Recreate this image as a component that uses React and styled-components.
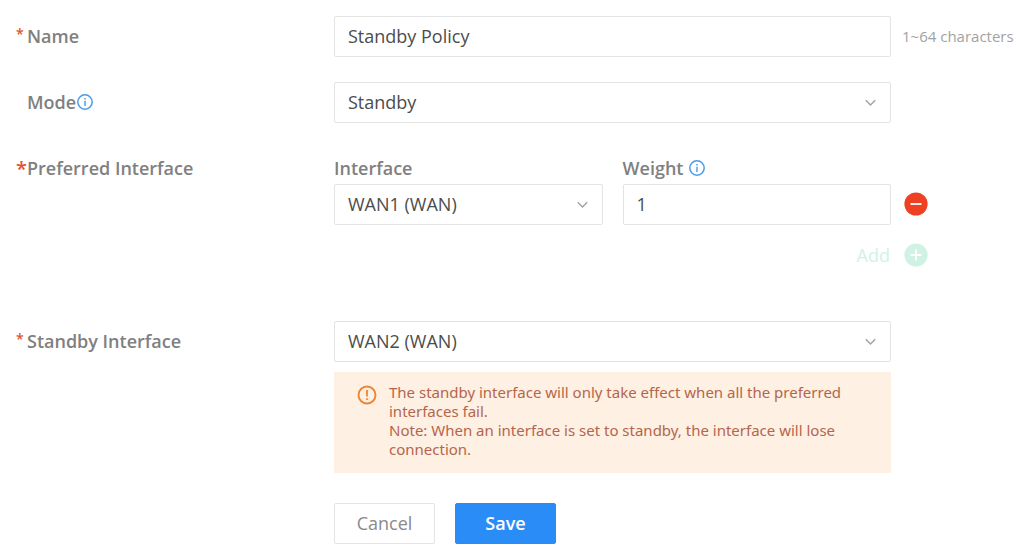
import React from 'react';
import styled, { createGlobalStyle } from 'styled-components';

const GlobalStyle = createGlobalStyle`
  *, *::before, *::after { box-sizing: border-box; }
  body {
    margin: 0;
    background: #fff;
    color: #4c4c4c;
    font: 400 18px/24px 'Open Sans', 'Noto Sans', sans-serif;
  }
`;

const Form = styled.form`
  padding: 16px 0 12px 16px;
`;

const Row = styled.div`
  display: grid;
  grid-template-columns: minmax(0, 318fr) minmax(0, 557fr) 133px;
  align-items: start;
  margin-bottom: ${({ $gap = 25 }) => $gap}px;
`;

const LabelCell = styled.div`
  display: flex;
  align-items: center;
  height: ${({ $short }) => ($short ? 24 : 40)}px;
  color: #808080;
  font-weight: 600;
`;

const Mark = styled.span`
  flex: none;
  width: 11px;
  height: 24px;
  color: #e0532f;
  font-size: ${({ $large }) => ($large ? 20 : 14)}px;
  line-height: ${({ $large }) => ($large ? 26 : 20)}px;
`;

const Control = styled.div`
  min-width: 0;
`;

const Aside = styled.div`
  display: flex;
  align-items: center;
  height: 40px;
  padding-left: ${({ $pad = 11 }) => $pad}px;
  color: #a2a2a2;
  font-size: 15px;
  white-space: nowrap;
`;

const TextInput = styled.input`
  display: block;
  width: 100%;
  height: 41px;
  padding: 0 13px 2px;
  border: 1px solid #e3e3e3;
  border-radius: 2px;
  background: #fff;
  color: #4c4c4c;
  font: inherit;
`;

const SelectWrap = styled.div`
  position: relative;
  svg {
    position: absolute;
    top: 17px;
    right: 15px;
    pointer-events: none;
  }
`;

const SelectBox = styled(TextInput).attrs({ as: 'select' })`
  appearance: none;
`;

const InfoButton = styled.button`
  display: flex;
  padding: 0;
  margin-left: ${({ $gap }) => $gap}px;
  border: 0;
  background: none;
`;

const Pair = styled.div`
  display: grid;
  grid-template-columns: 1fr 1fr;
  column-gap: 20px;
`;

const FieldHead = styled.div`
  display: flex;
  align-items: center;
  height: 28px;
  padding-bottom: 4px;
  color: #808080;
  font-weight: 600;
`;

const PairAside = styled(Aside)`
  margin-top: 28px;
`;

const IconButton = styled.button`
  display: flex;
  padding: 0;
  border: 0;
  background: none;
`;

const AddButton = styled.button`
  grid-column: 2 / 4;
  justify-self: end;
  display: flex;
  align-items: center;
  gap: 14px;
  margin: 18px 96px 0 0;
  padding: 0;
  border: 0;
  background: none;
  color: #d0f2e5;
  font: inherit;
`;

const Notice = styled.div`
  display: flex;
  gap: 12px;
  margin-top: 10px;
  padding: 11px 24px 14px 23px;
  background: #fef0e2;
  color: #b5654c;
  font-family: 'Noto Sans', 'Open Sans', sans-serif;
  font-size: 15px;
  line-height: 19px;
  svg { flex: none; margin-top: 2px; }
  p { margin: 0; }
`;

const Actions = styled.div`
  grid-column: 2;
  display: flex;
  gap: 20px;
  margin-top: 5px;
`;

const Button = styled.button`
  width: 101px;
  height: 41px;
  padding: 0 0 2px;
  border: 1px solid ${({ $primary }) => ($primary ? '#2a8df7' : '#e3e3e3')};
  border-radius: 2px;
  background: ${({ $primary }) => ($primary ? '#2a8df7' : '#fff')};
  color: ${({ $primary }) => ($primary ? '#fff' : '#8a8a8a')};
  font: inherit;
  font-weight: ${({ $primary }) => ($primary ? 600 : 400)};
`;

const InfoIcon = () => (
  <svg width="16" height="16" viewBox="0 0 16 16" aria-hidden="true">
    <circle cx="8" cy="8" r="7.2" fill="none" stroke="#4a9be8" strokeWidth="1.5" />
    <path d="M8 6.7V12M8 4v1.4" stroke="#4a9be8" strokeWidth="1.4" />
  </svg>
);

const Chevron = () => (
  <svg width="11" height="8" viewBox="0 0 11 8" aria-hidden="true">
    <path d="M0.8 1.3 5.5 6 10.2 1.3" fill="none" stroke="#a3a3a3" strokeWidth="1.5" />
  </svg>
);

const RoundIcon = ({ color, plus }) => (
  <svg width="24" height="24" viewBox="0 0 24 24" aria-hidden="true">
    <circle cx="12" cy="12" r="11.6" fill={color} />
    <path d={plus ? 'M6.5 12h11M12 6.5v11' : 'M6.5 12h11'} stroke="#fff" strokeWidth="1.8" />
  </svg>
);

const AlertIcon = () => (
  <svg width="20" height="20" viewBox="0 0 20 20" aria-hidden="true">
    <circle cx="10" cy="10" r="8.5" fill="none" stroke="#ee8533" strokeWidth="1.9" />
    <path d="M10 5v6.5M10 13.2v1.9" stroke="#ee8533" strokeWidth="1.8" />
  </svg>
);

const Select = ({ id, value }) => (
  <SelectWrap>
    <SelectBox id={id} defaultValue={value}>
      <option>{value}</option>
    </SelectBox>
    <Chevron />
  </SelectWrap>
);

export default function App() {
  return (
    <>
      <GlobalStyle />
      <Form onSubmit={(e) => e.preventDefault()}>
        <Row>
          <LabelCell>
            <Mark>*</Mark>
            <label htmlFor="name">Name</label>
          </LabelCell>
          <Control>
            <TextInput id="name" defaultValue="Standby Policy" />
          </Control>
          <Aside>1~64 characters</Aside>
        </Row>

        <Row $gap={33}>
          <LabelCell>
            <Mark />
            <label htmlFor="mode">Mode</label>
            <InfoButton type="button" $gap={1} aria-label="About mode">
              <InfoIcon />
            </InfoButton>
          </LabelCell>
          <Control>
            <Select id="mode" value="Standby" />
          </Control>
        </Row>

        <Row $gap={54}>
          <LabelCell $short>
            <Mark $large>*</Mark>
            <span>Preferred Interface</span>
          </LabelCell>
          <Pair>
            <div>
              <FieldHead>
                <label htmlFor="interface">Interface</label>
              </FieldHead>
              <Select id="interface" value="WAN1 (WAN)" />
            </div>
            <div>
              <FieldHead>
                <label htmlFor="weight">Weight</label>
                <InfoButton type="button" $gap={6} aria-label="About weight">
                  <InfoIcon />
                </InfoButton>
              </FieldHead>
              <TextInput id="weight" defaultValue="1" />
            </div>
          </Pair>
          <PairAside $pad={13}>
            <IconButton type="button" aria-label="Remove interface">
              <RoundIcon color="#ee4023" />
            </IconButton>
          </PairAside>
          <AddButton type="button">
            Add
            <RoundIcon color="#d0f2e5" plus />
          </AddButton>
        </Row>

        <Row>
          <LabelCell>
            <Mark>*</Mark>
            <label htmlFor="standby">Standby Interface</label>
          </LabelCell>
          <Control>
            <Select id="standby" value="WAN2 (WAN)" />
            <Notice>
              <AlertIcon />
              <p>
                The standby interface will only take effect when all the preferred interfaces fail.
                <br />
                Note: When an interface is set to standby, the interface will lose connection.
              </p>
            </Notice>
          </Control>
        </Row>

        <Row $gap={0}>
          <Actions>
            <Button type="button">Cancel</Button>
            <Button type="submit" $primary>Save</Button>
          </Actions>
        </Row>
      </Form>
    </>
  );
}
